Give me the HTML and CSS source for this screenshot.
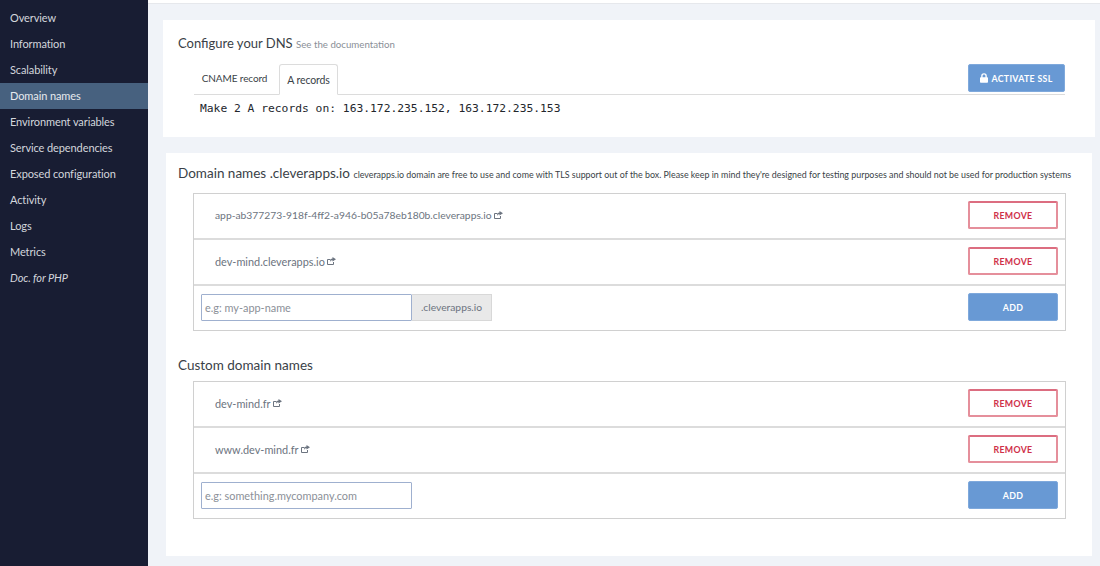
FILE: index.html
```html
<!DOCTYPE html>
<html lang="en">
<head>
<meta charset="utf-8">
<title>Domain names</title>
<link rel="stylesheet" href="styles.css">
</head>
<body>
<div class="app">
  <nav class="sidebar">
    <a class="nav-item">Overview</a>
    <a class="nav-item">Information</a>
    <a class="nav-item">Scalability</a>
    <a class="nav-item active">Domain names</a>
    <a class="nav-item">Environment variables</a>
    <a class="nav-item">Service dependencies</a>
    <a class="nav-item">Exposed configuration</a>
    <a class="nav-item">Activity</a>
    <a class="nav-item">Logs</a>
    <a class="nav-item">Metrics</a>
    <a class="nav-item doc">Doc. for PHP</a>
  </nav>
  <main class="main">
    <div class="topbar"></div>
    <section class="card card-dns">
      <h2 class="title title-dns">Configure your DNS <small class="doc-link">See the documentation</small></h2>
      <div class="tabs-row">
        <div class="tab tab-cname">CNAME record</div>
        <div class="tab tab-active">A records</div>
        <button class="btn btn-primary btn-ssl">
          <svg class="lock" viewBox="0 0 10 12" width="8" height="10"><path fill="#fff" d="M1.5 5V3.5a3.5 3.5 0 0 1 7 0V5h.5a1 1 0 0 1 1 1v5a1 1 0 0 1-1 1H1a1 1 0 0 1-1-1V6a1 1 0 0 1 1-1zM3.2 5h3.6V3.5a1.8 1.8 0 0 0-3.6 0z"/></svg>
          ACTIVATE SSL
        </button>
      </div>
      <p class="records">Make 2 A records on: 163.172.235.152, 163.172.235.153</p>
    </section>
    <section class="card card-domains">
      <h2 class="title">Domain names .cleverapps.io <small class="note">cleverapps.io domain are free to use and come with TLS support out of the box. Please keep in mind they're designed for testing purposes and should not be used for production systems</small></h2>
      <div class="list">
        <div class="row">
          <span class="domain domain-long">app-ab377273-918f-4ff2-a946-b05a78eb180b.cleverapps.io<svg class="ext" viewBox="0 0 9 8" width="9" height="8"><path fill="none" stroke="#6c7480" d="M6.5 5v2.500H.5v-5h3"/><path fill="#6c7480" d="M5.500 0 9 2.200 5.500 4.500V3.200C4.300 3.200 3.500 3.800 3 5c0-2 .9-3.200 2.500-3.400z"/></svg></span>
          <button class="btn btn-danger">REMOVE</button>
        </div>
        <div class="row">
          <span class="domain">dev-mind.cleverapps.io<svg class="ext" viewBox="0 0 9 8" width="9" height="8"><path fill="none" stroke="#6c7480" d="M6.5 5v2.500H.5v-5h3"/><path fill="#6c7480" d="M5.500 0 9 2.200 5.500 4.500V3.200C4.300 3.200 3.500 3.800 3 5c0-2 .9-3.200 2.500-3.400z"/></svg></span>
          <button class="btn btn-danger">REMOVE</button>
        </div>
        <div class="row row-form">
          <div class="input-group">
            <input class="input" placeholder="e.g: my-app-name">
            <span class="addon">.cleverapps.io</span>
          </div>
          <button class="btn btn-primary">ADD</button>
        </div>
      </div>
      <h2 class="title title-custom">Custom domain names</h2>
      <div class="list list-custom">
        <div class="row">
          <span class="domain">dev-mind.fr<svg class="ext" viewBox="0 0 9 8" width="9" height="8"><path fill="none" stroke="#6c7480" d="M6.5 5v2.500H.5v-5h3"/><path fill="#6c7480" d="M5.500 0 9 2.200 5.500 4.500V3.200C4.300 3.200 3.500 3.800 3 5c0-2 .9-3.200 2.500-3.400z"/></svg></span>
          <button class="btn btn-danger">REMOVE</button>
        </div>
        <div class="row">
          <span class="domain">www.dev-mind.fr<svg class="ext" viewBox="0 0 9 8" width="9" height="8"><path fill="none" stroke="#6c7480" d="M6.5 5v2.500H.5v-5h3"/><path fill="#6c7480" d="M5.500 0 9 2.200 5.500 4.500V3.200C4.300 3.200 3.500 3.800 3 5c0-2 .9-3.200 2.500-3.400z"/></svg></span>
          <button class="btn btn-danger">REMOVE</button>
        </div>
        <div class="row row-form">
          <div class="input-group">
            <input class="input" placeholder="e.g: something.mycompany.com">
          </div>
          <button class="btn btn-primary">ADD</button>
        </div>
      </div>
    </section>
  </main>
</div>
</body>
</html>
```
FILE: styles.css
```css
* { box-sizing: border-box; }
html, body { margin: 0; height: 100%; overflow: hidden; }
body { font-family: Lato, sans-serif; color: #3a3f47; background: #f0f3f8; }
.app { display: flex; height: 566px; }
.sidebar { width: 148px; flex: none; background: #181d33; padding-top: 5px; }
.nav-item { display: block; height: 26px; line-height: 26px; padding-left: 10px; font-size: 11px; letter-spacing: -.1px; color: #d3d6dc; white-space: nowrap; }
.nav-item.active { background: #47617f; color: #e6e9ee; }
.nav-item.doc { font-style: italic; }
.main { flex: 1; min-width: 0; }
.topbar { height: 4px; background: #fff; border-bottom: 1px solid #e6e8ec; }
.card { background: #fff; }
.card-dns { margin: 16px 5px 16px 15px; height: 117px; padding: 13px 30px 0 15px; }
.card-domains { margin: 0 8px 0 18px; height: 403px; padding: 10px 26px 0 12px; }
.title { margin: 0; font-size: 13.500px; font-weight: 400; line-height: 20px; color: #3a3f47; white-space: nowrap; }
.title-dns { font-size: 13px; }
.doc-link { font-size: 9.700px; color: #8a8f97; }
.note { font-size: 8.900px; color: #3a3f47; }
.tabs-row { display: flex; align-items: flex-end; margin: 10px 0 0 16px; height: 31px; border-bottom: 1px solid #dcdcdc; }
.tab { height: 31px; line-height: 30px; text-align: center; font-size: 10.500px; letter-spacing: -.1px; color: #3a3f47; }
.tab-cname { width: 85px; padding-right: 4px; font-size: 10px; }
.tab-active { width: 59px; background: #fff; border: 1px solid #dcdcdc; border-bottom: 1px solid #fff; border-radius: 3px 3px 0 0; margin-bottom: -1px; }
.records { margin: 6px 0 0 22px; font: 11.300px/16px "DejaVu Sans Mono", monospace; color: #22262c; }
.list { margin: 8px 0 0 15px; width: 873px; border: 1px solid #d0d0d0; }
.list-custom { margin-top: 6px; }
.row { display: flex; align-items: center; justify-content: space-between; height: 46px; padding: 0 7px 2px 21px; border-bottom: 2px solid #dcdcdc; }
.row-form { height: 44px; padding: 0 7px 2px 7px; border-bottom: 0; }
.domain { font-size: 10.900px; color: #6c7480; display: flex; align-items: center; gap: 2px; }
.domain-long { font-size: 10.300px; }
.btn { height: 28px; border-radius: 2px; font: 700 8.800px Lato, sans-serif; letter-spacing: .3px; cursor: pointer; width: 90px; }
.btn-primary { background: #6899d4; border: 1px solid #7fa9dc; color: #fff; }
.btn-danger { background: #fff; border: 2px solid #e58f9b; border-top-color: #dc6d80; color: #cf3049; }
.btn-ssl { width: 97px; margin: 0 0 2px auto; display: flex; align-items: center; justify-content: center; gap: 3px; }
.input-group { display: flex; }
.input { width: 211px; height: 27px; padding: 0 3px; border: 1px solid #9fb0cf; border-radius: 1px; font: 10.900px Lato, sans-serif; color: #333; }
.input::placeholder { color: #8b9098; opacity: 1; }
.addon { height: 27px; width: 80px; line-height: 25px; text-align: center; font-size: 10.300px; background: #e9e9e9; border: 1px solid #d8d8d8; border-left: 0; color: #6c7480; }
.title-custom { margin-top: 24px; }
```
